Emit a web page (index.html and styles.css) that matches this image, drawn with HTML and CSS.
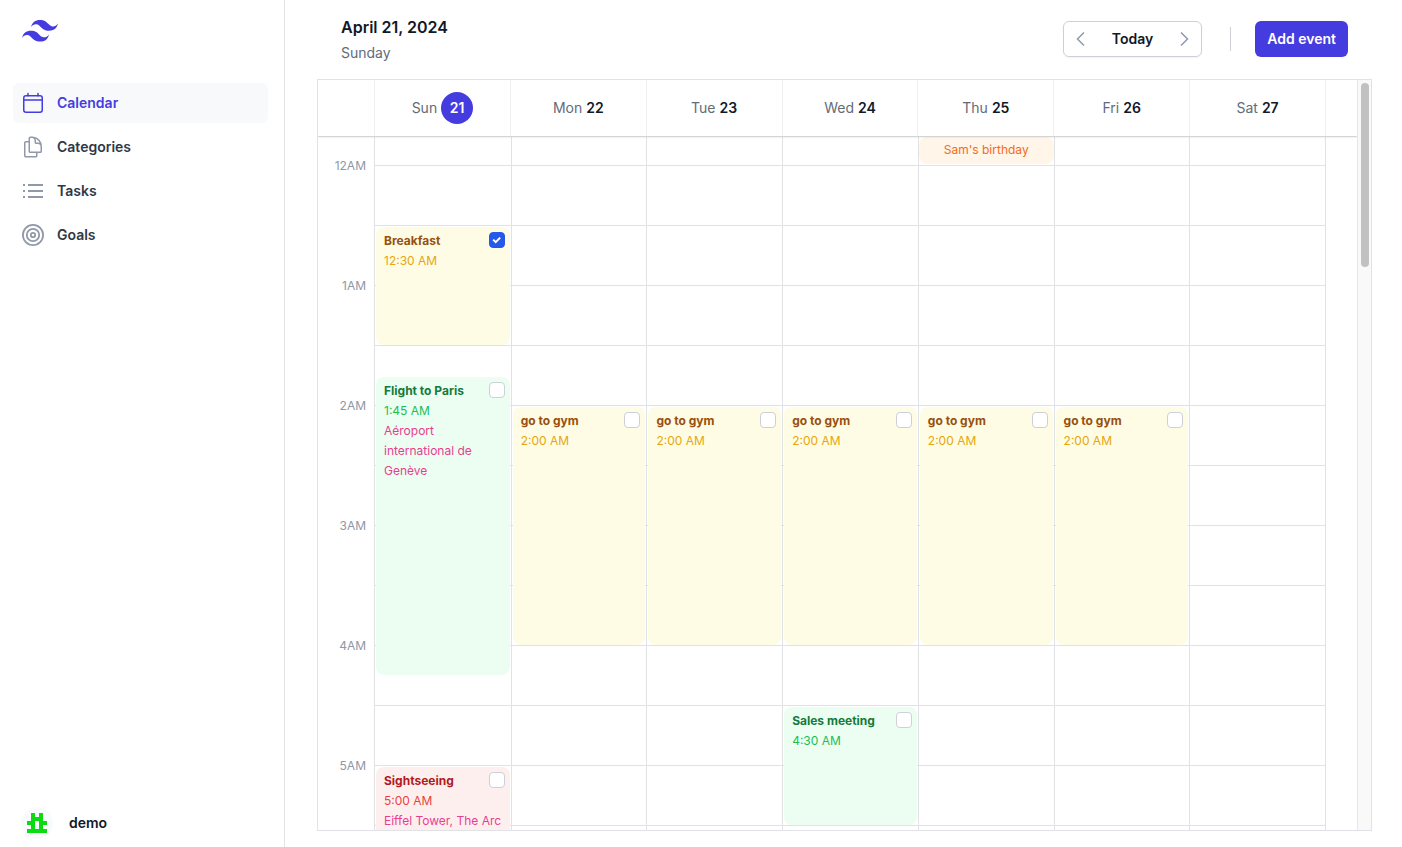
FILE: index.html
```html
<!DOCTYPE html>
<html lang="en">
<head>
<meta charset="utf-8">
<title>Calendar</title>
<link rel="stylesheet" href="styles.css">
</head>
<body>
<div class="app">
  <aside class="sidebar">
    <a class="logo" href="#" aria-label="Home">
      <svg width="36" height="22" viewBox="0 0 54 33" fill="currentColor" aria-hidden="true"><path d="M27 0c-7.2 0-11.7 3.6-13.5 10.8 2.7-3.6 5.85-4.95 9.45-4.05 2.054.513 3.522 2.004 5.147 3.653C30.744 13.09 33.808 16.2 40.5 16.2c7.2 0 11.7-3.6 13.5-10.8-2.7 3.6-5.85 4.95-9.45 4.05-2.054-.513-3.522-2.004-5.147-3.653C36.756 3.11 33.692 0 27 0zM13.5 16.2C6.3 16.2 1.8 19.8 0 27c2.7-3.6 5.85-4.95 9.45-4.05 2.054.514 3.522 2.004 5.147 3.653C17.244 29.29 20.308 32.4 27 32.4c7.2 0 11.7-3.6 13.5-10.8-2.7 3.6-5.85 4.95-9.45 4.05-2.054-.513-3.522-2.004-5.147-3.653C23.256 19.31 20.192 16.2 13.5 16.2z"/></svg>
    </a>
    <nav class="nav">
      <a class="nav-link active" href="#">
        <svg class="icon" viewBox="0 0 24 24"><rect x="2.75" y="4.75" width="18.5" height="16.5" rx="2.2"/><path d="M2.75 9h18.5M7 2.5v2.25M17 2.5v2.25"/></svg>
        Calendar</a>
      <a class="nav-link" href="#">
        <svg class="icon" viewBox="0 0 24 24"><path d="M15.75 17.25v3.375c0 .621-.504 1.125-1.125 1.125h-9.75a1.125 1.125 0 01-1.125-1.125V7.875c0-.621.504-1.125 1.125-1.125H6.75a9.06 9.06 0 011.5.124m7.5 10.376h3.375c.621 0 1.125-.504 1.125-1.125V11.25c0-4.46-3.243-8.161-7.5-8.876a9.06 9.06 0 00-1.5-.124H9.375c-.621 0-1.125.504-1.125 1.125v3.5m7.5 10.375H9.375a1.125 1.125 0 01-1.125-1.125v-9.25m12 6.625v-1.875a3.375 3.375 0 00-3.375-3.375h-1.5a1.125 1.125 0 01-1.125-1.125v-1.5a3.375 3.375 0 00-3.375-3.375H9.75"/></svg>
        Categories</a>
      <a class="nav-link" href="#">
        <svg class="icon" viewBox="0 0 24 24"><path class="flat" stroke-width="2" d="M7 6h15M7 12h15M7 18h15M2 6h2M2 12h2M2 18h2"/></svg>
        Tasks</a>
      <a class="nav-link" href="#">
        <svg class="icon" viewBox="0 0 24 24"><g stroke-width="1.8"><circle cx="12" cy="12" r="10.1"/><circle cx="12" cy="12" r="6.2"/><circle cx="12" cy="12" r="2.2"/></g></svg>
        Goals</a>
    </nav>
    <a class="profile" href="#">
      <svg width="32" height="32" viewBox="0 0 32 32" aria-hidden="true"><circle cx="16" cy="16" r="16" fill="#f9fafb"/><path fill="#0bdc12" fill-rule="evenodd" d="M10 6h4v4h4V6h4v8h4v4h-4v4h4v4H6v-4h4v-4H6v-4h4zM14 14v8h4v-8z"/></svg>
      <span>demo</span>
    </a>
  </aside>

  <main class="main">
    <header class="topbar">
      <div>
        <h1 class="title">April 21, 2024</h1>
        <p class="subtitle">Sunday</p>
      </div>
      <div class="actions">
        <div class="switcher">
          <button class="arrow" type="button" aria-label="Previous week"><svg width="20" height="20" viewBox="0 0 20 20"><path d="M13 3.5 6.5 10l6.5 6.5"/></svg></button>
          <button class="today" type="button">Today</button>
          <button class="arrow" type="button" aria-label="Next week"><svg width="20" height="20" viewBox="0 0 20 20"><path d="M7 3.5l6.5 6.5L7 16.5"/></svg></button>
        </div>
        <div class="separator"></div>
        <button class="add" type="button">Add event</button>
      </div>
    </header>

    <section class="calendar">
      <div class="week">
        <div class="days">
          <div class="gutter"></div>
          <div class="day">Sun <b class="current">21</b></div>
          <div class="day">Mon <b>22</b></div>
          <div class="day">Tue <b>23</b></div>
          <div class="day">Wed <b>24</b></div>
          <div class="day">Thu <b>25</b></div>
          <div class="day">Fri <b>26</b></div>
          <div class="day">Sat <b>27</b></div>
          <div class="tail"></div>
        </div>
        <div class="body">
          <div class="hours">
            <span>12AM</span><span>1AM</span><span>2AM</span><span>3AM</span><span>4AM</span><span>5AM</span>
          </div>
          <div class="columns">
            <ol class="column">
              <li class="event yellow from-0030 long-60"><label><b>Breakfast</b><input type="checkbox" checked></label><time>12:30 AM</time></li>
              <li class="event green from-0145 long-150"><label><b>Flight to Paris</b><input type="checkbox"></label><time>1:45 AM</time><p>Aéroport international de Genève</p></li>
              <li class="event red from-0500 long-60"><label><b>Sightseeing</b><input type="checkbox"></label><time>5:00 AM</time><p>Eiffel Tower, The Arc</p></li>
            </ol>
            <ol class="column">
              <li class="event yellow from-0200 long-120"><label><b>go to gym</b><input type="checkbox"></label><time>2:00 AM</time></li>
            </ol>
            <ol class="column">
              <li class="event yellow from-0200 long-120"><label><b>go to gym</b><input type="checkbox"></label><time>2:00 AM</time></li>
            </ol>
            <ol class="column">
              <li class="event yellow from-0200 long-120"><label><b>go to gym</b><input type="checkbox"></label><time>2:00 AM</time></li>
              <li class="event green from-0430 long-60"><label><b>Sales meeting</b><input type="checkbox"></label><time>4:30 AM</time></li>
            </ol>
            <ol class="column">
              <li class="all-day">Sam's birthday</li>
              <li class="event yellow from-0200 long-120"><label><b>go to gym</b><input type="checkbox"></label><time>2:00 AM</time></li>
            </ol>
            <ol class="column">
              <li class="event yellow from-0200 long-120"><label><b>go to gym</b><input type="checkbox"></label><time>2:00 AM</time></li>
            </ol>
            <ol class="column"></ol>
          </div>
          <div class="tail"></div>
        </div>
      </div>
      <div class="scrollbar"><div class="thumb"></div></div>
    </section>
  </main>
</div>
</body>
</html>
```
FILE: styles.css
```css
* { box-sizing: border-box; margin: 0; padding: 0; }

body {
  font-family: Inter, "Liberation Sans", sans-serif;
  font-size: 14px;
  line-height: 24px;
  color: #111827;
  background: #fff;
}

a { color: inherit; text-decoration: none; }
ol { list-style: none; }
button { font: inherit; font-weight: 600; border: 0; background: none; color: inherit; cursor: pointer; }
b { font-weight: 600; }

.app { display: flex; height: 100vh; overflow: hidden; }

/* Sidebar */
.sidebar {
  flex: none;
  width: 285px;
  padding: 0 16px 0 13px;
  display: flex;
  flex-direction: column;
  border-right: 1px solid #e1e3e7;
}
.logo { height: 83px; padding: 20px 9px; color: #453ce0; }
.logo svg { display: block; }
.nav { flex: 1; display: flex; flex-direction: column; gap: 4px; }
.nav-link {
  display: flex;
  align-items: center;
  gap: 12px;
  padding: 8px;
  border-radius: 6px;
  font-weight: 600;
  color: #2f3846;
}
.icon {
  width: 24px;
  height: 24px;
  fill: none;
  stroke: #9199a8;
  stroke-width: 1.5;
  stroke-linecap: round;
  stroke-linejoin: round;
}
.icon .flat { stroke-linecap: butt; }
.active { background: #f8f9fb; color: #453ce0; }
.active .icon { stroke: #453ce0; }
.profile { display: flex; align-items: center; gap: 16px; padding: 8px; font-weight: 600; }

/* Top bar */
.main { flex: 1; min-width: 0; padding: 0 30px 16px 32px; display: flex; flex-direction: column; }
.topbar { display: flex; justify-content: space-between; align-items: center; height: 77px; margin-bottom: 2px; padding: 0 24px; }
.title { font-size: 16px; font-weight: 600; line-height: 24px; }
.subtitle { margin-top: 4px; line-height: 20px; color: #636b79; }
.topbar > div:first-child { padding-top: 1px; }
.actions { display: flex; align-items: center; }
.switcher {
  display: flex;
  height: 36px;
  border: 1px solid #cdd0d8;
  border-radius: 6px;
  box-shadow: 0 1px 2px rgb(0 0 0 / 5%);
}
.arrow { width: 35px; display: grid; place-items: center; }
.arrow svg { fill: none; stroke: #9199a8; stroke-width: 1.5; }
.today { padding: 0 13px; }
.separator { width: 1px; height: 24px; margin: 0 24px 0 28px; background: #cdd0d8; }
.add { height: 36px; padding: 0 12px; border-radius: 6px; background: #453ce0; color: #fff; }

/* Week grid */
.calendar { flex: 1; min-height: 0; display: flex; border: 1px solid #e1e2e8; }
.week { flex: 1; min-width: 0; overflow: hidden; }
.days {
  position: relative;
  z-index: 1;
  display: grid;
  grid-template-columns: 56px repeat(7, 1fr) 32px;
  height: 56px;
  background: #fff;
  box-shadow: 0 0 0 1px rgb(0 0 0 / 8%), 0 1px 2px rgb(0 0 0 / 14%);
}
.day { display: flex; align-items: center; justify-content: center; gap: 4px; border-left: 1px solid #f0f0f4; color: #636b79; }
.day b { color: #111827; }
.days .tail { border-left: 1px solid #f0f0f4; }
.day .current {
  width: 32px;
  border-radius: 50%;
  background: #453ce0;
  color: #fff;
  line-height: 32px;
  text-align: center;
}
.body { display: grid; grid-template-columns: 56px 1fr 32px; padding-top: 1px; }
.body .tail { border-left: 1px solid #e1e2e6; }
.hours { padding: 19px 8px 0 0; display: grid; grid-auto-rows: 120px; font-size: 12px; line-height: 20px; text-align: right; color: #8f97a5; }
.columns {
  display: grid;
  grid-template-columns: repeat(7, 1fr);
  border-left: 1px solid #e1e2e6;
  background: repeating-linear-gradient(#e1e2e6 0 1px, transparent 1px 60px) 0 28px no-repeat;
}
/* One row for all-day entries, then one row per quarter hour */
.column {
  min-width: 0;
  display: grid;
  grid-template-columns: minmax(0, 1fr);
  grid-template-rows: 28px repeat(24, 30px);
}
.column + .column { border-left: 1px solid #e1e2e6; }
.all-day { grid-row: 1; margin-bottom: 1px; border-radius: 8px; background: #fff5e9; color: #f66a1c; font-size: 12px; line-height: 26px; text-align: center; }
.event { margin: 2px 1px 0; padding: 4px 5px 4px 8px; border-radius: 8px; overflow: hidden; font-size: 12px; line-height: 20px; }
.event label { display: flex; justify-content: space-between; height: 20px; }
.event b { font-weight: 700; }
.event time { display: block; }
.event p { color: #e83e8f; }

.from-0030 { grid-row-start: 4; }
.from-0145 { grid-row-start: 9; }
.from-0200 { grid-row-start: 10; }
.from-0430 { grid-row-start: 20; }
.from-0500 { grid-row-start: 22; }
.long-60 { grid-row-end: span 4; }
.long-120 { grid-row-end: span 8; }
.long-150 { grid-row-end: span 10; }

.yellow { background: #fefce4; color: #e6a60c; }
.yellow b { color: #98500f; }
.green { background: #ecfdf2; color: #20bd55; }
.green b { color: #157a3a; }
.red { background: #feefef; color: #eb3f3f; }
.red b { color: #b01c1c; }

.event input {
  appearance: none;
  flex: none;
  width: 16px;
  height: 16px;
  margin-top: 1px;
  border: 1px solid #cdd0d8;
  border-radius: 4px;
  background: #fff;
  display: grid;
  place-items: center;
}
.event input:checked { background: #2459eb; border-color: #2459eb; }
/* Tick mark */
.event input:checked::before {
  content: "";
  width: 10px;
  height: 8px;
  background: #fff;
  clip-path: polygon(0.8px 4.2px, 2.2px 2.9px, 4px 4.7px, 7.8px 0.9px, 9.2px 2.2px, 4px 7.4px);
}

.scrollbar { flex: none; width: 14px; padding: 3px 2px 0 3px; background: #f9f9f9; border-left: 1px solid #e6e6e6; }
.thumb { width: 8px; height: 184px; border-radius: 4px; background: #c1c1c1; }
```
